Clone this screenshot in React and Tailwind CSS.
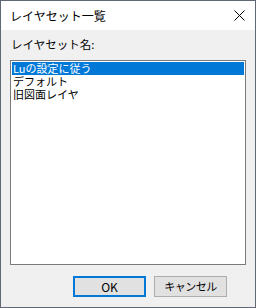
const FONT = { fontFamily: '"Noto Sans CJK JP", "Noto Sans", sans-serif' };

const ITEMS = ['Luの設定に従う', 'デフォルト', '旧図面レイヤ'];

export default function App() {
  return (
    <div
      className="w-[256px] h-[308px] flex flex-col border border-[#5f6873] bg-[#f0f0f0] text-black text-[12px] leading-none overflow-hidden"
      style={FONT}
    >
      {/* Title bar */}
      <div className="h-[29px] shrink-0 bg-white flex items-center pl-[9px] pr-[9px]">
        <span className="flex-1 text-[12px]">レイヤセット一覧</span>
        <svg width="11" height="11" viewBox="0 0 11 11" className="mr-[1px]">
          <path d="M0.5 0.5 L10.5 10.5 M10.5 0.5 L0.5 10.5" stroke="#000" strokeWidth="1" />
        </svg>
      </div>

      {/* Body */}
      <div className="flex-1 flex flex-col px-[9px] pt-[8px]">
        <div className="h-[13px] flex items-center pl-[1px] text-[11.5px] leading-none">レイヤセット名:</div>
        <div className="mt-[9px] h-[205px] border border-[#7a7a7a] bg-white p-[1px]">
          {ITEMS.map((t, i) => (
            <div
              key={t}
              className={
                'h-[13px] flex items-center pl-[1px] text-[11px] leading-none ' +
                (i === 0 ? 'bg-[#0078d7] text-white' : '')
              }
            >
              {t}
            </div>
          ))}
        </div>
        <div className="mt-[11px] flex gap-[8px] pl-[63px]">
          <button className="w-[73px] h-[21px] border-2 border-[#0078d7] bg-[#e1e1e1] text-[12px]">
            OK
          </button>
          <button className="w-[73px] h-[21px] border border-[#adadad] bg-[#e1e1e1] text-[11px] tracking-[-0.5px]">
            キャンセル
          </button>
        </div>
      </div>
    </div>
  );
}
